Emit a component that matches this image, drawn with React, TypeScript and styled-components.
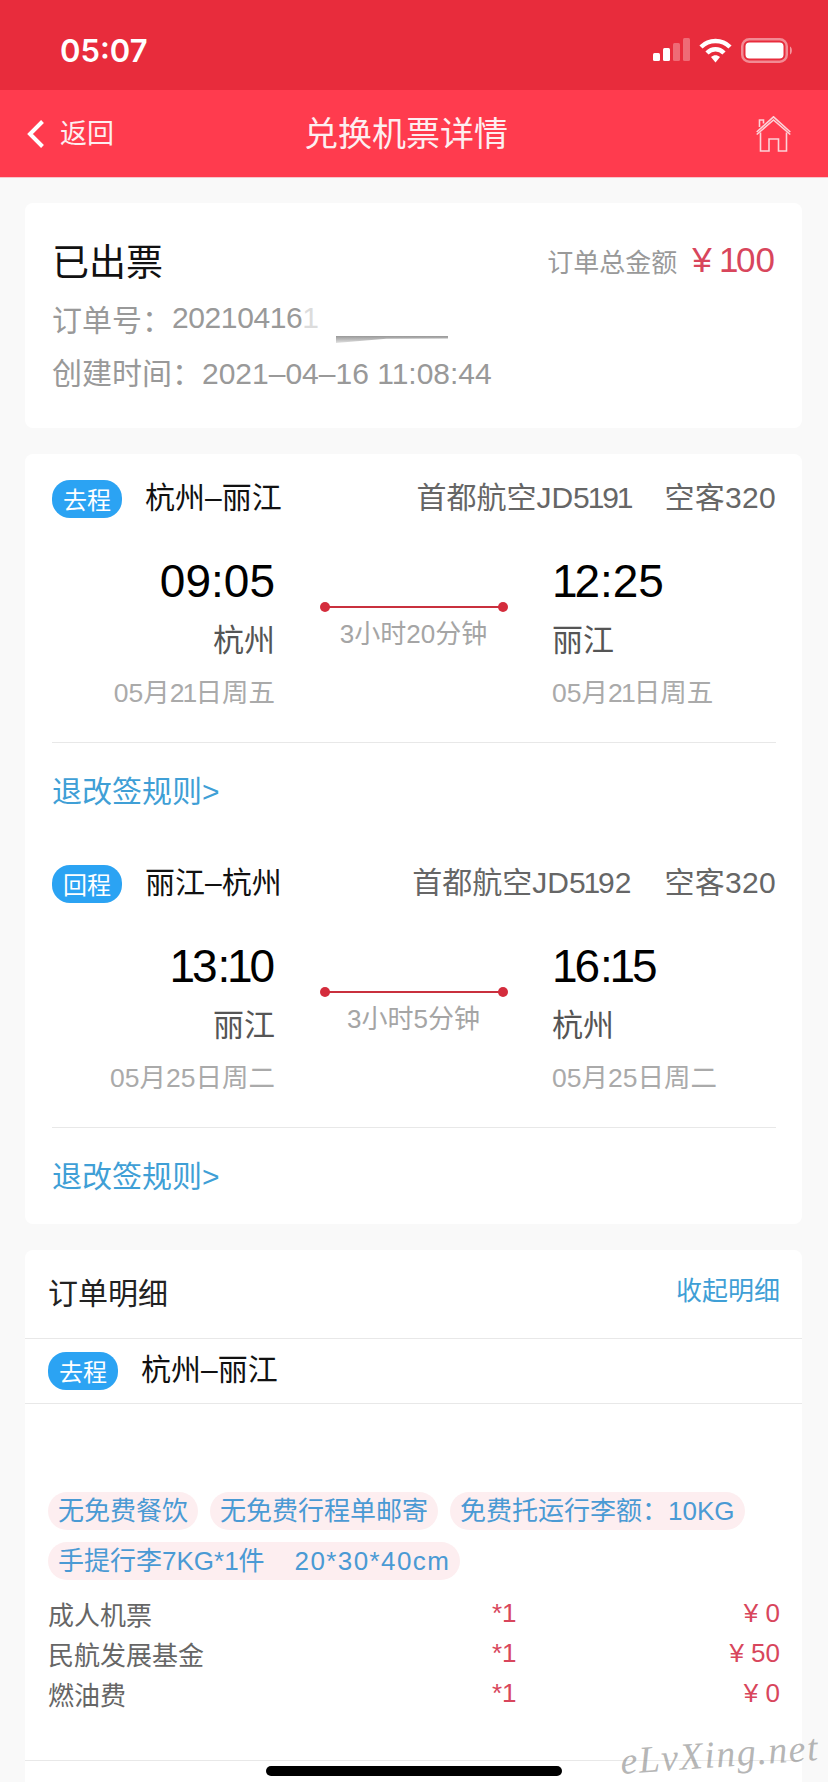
import { createGlobalStyle, styled } from 'styled-components';

const GlobalStyle = createGlobalStyle`
  html, body {
    margin: 0;
    padding: 0;
    background: #fff;
  }
  body {
    font-family: "Liberation Sans", "Noto Sans CJK SC", sans-serif;
  }
  * {
    box-sizing: border-box;
  }
`;

const Page = styled.div`
  position: relative;
  width: 828px;
  height: 1792px;
  overflow: hidden;
  background: #fff;
`;

const Screen = styled.div`
  height: 1782px;
  overflow: hidden;
  background: #f9f9f9;
`;

const StatusBar = styled.div`
  height: 90px;
  background: #e82c3c;
  display: flex;
  align-items: center;
  justify-content: space-between;
  padding: 10px 34px 0 60px;
  color: #fff;
`;

const Clock = styled.div`
  font-family: Inter, sans-serif;
  font-size: 31px;
  font-weight: 600;
`;

const StatusIcons = styled.div`
  display: flex;
  align-items: center;
  gap: 9px;
`;

const NavBar = styled.div`
  height: 88px;
  background: #ff3b4e;
  border-bottom: 1px solid #f7c6cb;
  display: grid;
  grid-template-columns: 304px 1fr auto;
  align-items: center;
  padding-right: 37px;
  color: #fdeef0;
`;

const BackLink = styled.div`
  display: flex;
  align-items: center;
  gap: 14px;
  padding-left: 26px;
  font-size: 27px;
`;

const BackLabel = styled.span`
  padding-bottom: 4px;
`;

const NavTitle = styled.div`
  font-size: 34px;
  padding-bottom: 4px;
`;

const Content = styled.div`
  display: flex;
  flex-direction: column;
  gap: 26px;
  padding: 25px 26px 0 25px;
`;

const Card = styled.div`
  background: #fff;
  border-radius: 8px;
`;

const SummaryCard = styled(Card)`
  height: 225px;
  padding: 30px 27px 0 27px;
`;

const SummaryTop = styled.div`
  display: flex;
  align-items: center;
  justify-content: space-between;
  height: 54px;
  margin-bottom: 4px;
`;

const StateText = styled.div`
  font-size: 37px;
  color: #111;
`;

const TotalBox = styled.div`
  display: flex;
  align-items: center;
  gap: 15px;
  font-size: 26px;
  color: #999;
`;

const TotalAmount = styled.span`
  font-size: 35px;
  color: #d8465c;
`;

const MetaLine = styled.div`
  display: flex;
  height: 53px;
  align-items: center;
  font-size: 30px;
  color: #999;
`;

const OrderNumber = styled.span`
  letter-spacing: -0.4px;
`;

const FadedDigit = styled.span`
  color: #dcdcdc;
`;

const Smudge = styled.div`
  position: absolute;
  left: 336px;
  top: 336px;
  width: 112px;
  height: 7px;
  background: linear-gradient(to bottom, #999 0%, #bbb 50%, #e2e2e2 100%);
  clip-path: polygon(0 0, 100% 0, 100% 35%, 45% 40%, 0 100%);
`;

const NarrowOne = styled.span<{ $lead?: boolean }>`
  margin-left: ${(p) => (p.$lead ? '0' : '-0.07em')};
  letter-spacing: -0.07em;
`;

const TripCard = styled(Card)`
  padding: 0 26px 0 27px;
`;

const Leg = styled.div`
  padding-top: 26px;
`;

const LegHeader = styled.div`
  display: flex;
  align-items: center;
  height: 38px;
  font-size: 30px;
`;

const LegTag = styled.span`
  display: flex;
  align-items: center;
  justify-content: center;
  width: 70px;
  height: 38px;
  flex-shrink: 0;
  padding-bottom: 2px;
  border-radius: 18px;
  background: #2ba3f3;
  color: #fff;
  font-size: 24px;
`;

const RouteName = styled.span`
  margin-left: 23px;
  padding-bottom: 8px;
  color: #111;
`;

const FlightInfo = styled.span`
  margin-left: auto;
  padding-bottom: 8px;
  display: flex;
  gap: 33px;
  color: #666;
`;

const PlaneName = styled.span`
  letter-spacing: 0.3px;
`;

const LegBody = styled.div`
  display: grid;
  grid-template-columns: 223px 277px 1fr;
  margin-top: 33px;
`;

const Stop = styled.div<{ $alignRight?: boolean }>`
  text-align: ${(p) => (p.$alignRight ? 'right' : 'left')};
`;

const StopTime = styled.div`
  height: 60px;
  line-height: 60px;
  font-size: 46px;
  color: #000;
`;

const StopCity = styled.div`
  height: 60px;
  line-height: 60px;
  font-size: 31px;
  color: #555;
`;

const StopDate = styled.div`
  height: 44px;
  line-height: 44px;
  font-size: 26.5px;
  color: #aaa;
`;

const Duration = styled.div`
  display: flex;
  flex-direction: column;
  align-items: center;
  padding-top: 51px;
`;

const DurationLine = styled.div`
  position: relative;
  width: 178px;
  height: 10px;
  &::before {
    content: '';
    position: absolute;
    left: 0;
    right: 0;
    top: 4px;
    height: 2px;
    background: #c9303e;
  }
`;

const LineDot = styled.span<{ $end?: boolean }>`
  position: absolute;
  top: 0;
  ${(p) => (p.$end ? 'right: -5px;' : 'left: -5px;')}
  width: 10px;
  height: 10px;
  border-radius: 50%;
  background: #d42c3c;
`;

const DurationText = styled.div`
  margin-top: 7px;
  font-size: 26px;
  line-height: 30px;
  color: #a5a5a5;
`;

const RuleRow = styled.div`
  height: 97px;
  margin-top: 27px;
  padding-bottom: 4px;
  border-top: 1px solid #e8e8e8;
  display: flex;
  align-items: center;
  font-size: 30px;
  color: #3f9fd6;
`;

const DetailHeader = styled.div`
  height: 89px;
  display: flex;
  align-items: center;
  justify-content: space-between;
  padding: 0 22px 6px 23px;
  border-bottom: 1px solid #e8e8e8;
`;

const DetailTitle = styled.div`
  font-size: 30px;
  color: #222;
`;

const CollapseLink = styled.div`
  font-size: 26px;
  color: #3f9fd6;
  margin-top: -6px;
`;

const DetailLeg = styled(LegHeader)`
  height: 65px;
  padding-left: 23px;
  border-bottom: 1px solid #e8e8e8;
`;

const DetailBody = styled.div`
  padding: 88px 22px 0 23px;
`;

const PerkList = styled.div`
  display: flex;
  flex-wrap: wrap;
  gap: 12px;
`;

const Perk = styled.span`
  height: 38px;
  line-height: 38px;
  padding: 0 10px;
  border-radius: 19px;
  background: #fdeef0;
  color: #4a9ad4;
  font-size: 26px;
  white-space: pre;
`;

const PerkSize = styled.span`
  margin-left: 30px;
  letter-spacing: 1.4px;
`;

const FeeList = styled.div`
  margin-top: 15px;
`;

const FeeRow = styled.div`
  display: grid;
  grid-template-columns: 444px 1fr auto;
  height: 40px;
  align-items: center;
  padding-bottom: 6px;
  font-size: 26px;
  color: #666;
`;

const FeeCount = styled.span`
  color: #d8465c;
`;

const FeeAmount = styled.span`
  color: #d8465c;
`;

const DetailFoot = styled.div`
  margin-top: 45px;
  height: 40px;
  border-top: 1px solid #e8e8e8;
`;

const HomeBar = styled.div`
  position: absolute;
  left: 266px;
  top: 1766px;
  width: 296px;
  height: 10px;
  border-radius: 5px;
  background: #000;
`;

const Watermark = styled.div`
  position: absolute;
  left: 620px;
  top: 1732px;
  font-family: "Liberation Serif", serif;
  font-style: italic;
  font-size: 38px;
  letter-spacing: 1.5px;
  color: rgba(150, 150, 150, 0.7);
  transform: rotate(-4deg);
`;

type LegData = {
  tag: string;
  route: string;
  flight: string;
  plane: string;
  from: { time: string; city: string; date: string };
  to: { time: string; city: string; date: string };
  duration: string;
};

const legs: LegData[] = [
  {
    tag: '去程',
    route: '杭州–丽江',
    flight: '首都航空JD5191',
    plane: '空客320',
    from: { time: '09:05', city: '杭州', date: '05月21日周五' },
    to: { time: '12:25', city: '丽江', date: '05月21日周五' },
    duration: '3小时20分钟',
  },
  {
    tag: '回程',
    route: '丽江–杭州',
    flight: '首都航空JD5192',
    plane: '空客320',
    from: { time: '13:10', city: '丽江', date: '05月25日周二' },
    to: { time: '16:15', city: '杭州', date: '05月25日周二' },
    duration: '3小时5分钟',
  },
];

const perks = ['无免费餐饮', '无免费行程单邮寄', '免费托运行李额：10KG'];

const fees = [
  { name: '成人机票', count: '*1', amount: '¥ 0' },
  { name: '民航发展基金', count: '*1', amount: '¥ 50' },
  { name: '燃油费', count: '*1', amount: '¥ 0' },
];

// the reference font has a narrow "1", Liberation's digits are all one width
function Digits({ text }: { text: string }) {
  return (
    <>
      {text.split('').map((c, i) =>
        c === '1' ? (
          <NarrowOne key={i} $lead={i === 0}>
            1
          </NarrowOne>
        ) : (
          c
        ),
      )}
    </>
  );
}

function SignalIcon() {
  return (
    <svg width="37" height="24" viewBox="0 0 37 24">
      <rect x="0" y="15" width="7" height="8" rx="1.5" fill="#fff" />
      <rect x="10" y="10" width="7" height="13" rx="1.5" fill="#fff" />
      <rect x="20" y="5" width="7" height="18" rx="1.5" fill="#fff" fillOpacity="0.3" />
      <rect x="30" y="0" width="7" height="23" rx="1.5" fill="#fff" fillOpacity="0.3" />
    </svg>
  );
}

function WifiIcon() {
  return (
    <svg width="33" height="25" viewBox="0 0 33 25" fill="none">
      <path d="M2 9 C10 1 23 1 31 9" stroke="#fff" strokeWidth="4.5" />
      <path d="M8 15 C13 10 20 10 25 15" stroke="#fff" strokeWidth="4.5" />
      <path d="M12 19 C15 16.5 18 16.5 21 19 L16.5 24.5 Z" fill="#fff" />
    </svg>
  );
}

function BatteryIcon() {
  return (
    <svg width="53" height="25" viewBox="0 0 53 25" fill="none">
      <rect x="1.25" y="1.25" width="44.5" height="22.5" rx="7" stroke="#fff" strokeOpacity="0.45" strokeWidth="2.5" />
      <rect x="4.5" y="4.5" width="38" height="16" rx="4" fill="#fff" />
      <path d="M49 8.5 C51.5 9.5 51.5 15.5 49 16.5 Z" fill="#fff" fillOpacity="0.5" />
    </svg>
  );
}

function BackIcon() {
  return (
    <svg width="20" height="30" viewBox="0 0 20 30" fill="none">
      <path d="M16.5 2.5 L4 15 L16.5 27.5" stroke="#fff" strokeWidth="4" />
    </svg>
  );
}

function HomeIcon() {
  return (
    <svg width="35" height="36" viewBox="0 0 35 36" fill="none" stroke="#fcd3d8" strokeWidth="1.6">
      <path d="M0.7 16 L17.5 0.8 L34.3 16" />
      <path d="M0.7 18.5 L17.5 4 L34.3 18.5" />
      <path d="M3.5 11 V4 H7.5 V7.5" />
      <path d="M4.5 16.5 V35 H13 V23 H22.5 V35 H30.5 V16.5" />
    </svg>
  );
}

function LegBlock({ leg }: { leg: LegData }) {
  return (
    <Leg>
      <LegHeader>
        <LegTag>{leg.tag}</LegTag>
        <RouteName>{leg.route}</RouteName>
        <FlightInfo>
          <span>
            <Digits text={leg.flight} />
          </span>
          <PlaneName>{leg.plane}</PlaneName>
        </FlightInfo>
      </LegHeader>
      <LegBody>
        <Stop $alignRight>
          <StopTime>
            <Digits text={leg.from.time} />
          </StopTime>
          <StopCity>{leg.from.city}</StopCity>
          <StopDate>
            <Digits text={leg.from.date} />
          </StopDate>
        </Stop>
        <Duration>
          <DurationLine>
            <LineDot />
            <LineDot $end />
          </DurationLine>
          <DurationText>{leg.duration}</DurationText>
        </Duration>
        <Stop>
          <StopTime>
            <Digits text={leg.to.time} />
          </StopTime>
          <StopCity>{leg.to.city}</StopCity>
          <StopDate>
            <Digits text={leg.to.date} />
          </StopDate>
        </Stop>
      </LegBody>
      <RuleRow>退改签规则&gt;</RuleRow>
    </Leg>
  );
}

export default function App() {
  return (
    <Page>
      <GlobalStyle />
      <Screen>
        <StatusBar>
          <Clock>05:07</Clock>
          <StatusIcons>
            <SignalIcon />
            <WifiIcon />
            <BatteryIcon />
          </StatusIcons>
        </StatusBar>
        <NavBar>
          <BackLink>
            <BackIcon />
            <BackLabel>返回</BackLabel>
          </BackLink>
          <NavTitle>兑换机票详情</NavTitle>
          <HomeIcon />
        </NavBar>
        <Content>
          <SummaryCard>
            <SummaryTop>
              <StateText>已出票</StateText>
              <TotalBox>
                订单总金额
                <TotalAmount>
                  <Digits text="¥ 100" />
                </TotalAmount>
              </TotalBox>
            </SummaryTop>
            <MetaLine>
              订单号：
              <OrderNumber>
                20210416
                <FadedDigit>1</FadedDigit>
              </OrderNumber>
            </MetaLine>
            <MetaLine>创建时间：2021–04–16 11:08:44</MetaLine>
          </SummaryCard>
          <TripCard>
            {legs.map((leg) => (
              <LegBlock key={leg.tag} leg={leg} />
            ))}
          </TripCard>
          <Card>
            <DetailHeader>
              <DetailTitle>订单明细</DetailTitle>
              <CollapseLink>收起明细</CollapseLink>
            </DetailHeader>
            <DetailLeg>
              <LegTag>去程</LegTag>
              <RouteName>杭州–丽江</RouteName>
            </DetailLeg>
            <DetailBody>
              <PerkList>
                {perks.map((perk) => (
                  <Perk key={perk}>{perk}</Perk>
                ))}
                <Perk>
                  手提行李7KG*1件
                  <PerkSize>20*30*40cm</PerkSize>
                </Perk>
              </PerkList>
              <FeeList>
                {fees.map((fee) => (
                  <FeeRow key={fee.name}>
                    <span>{fee.name}</span>
                    <FeeCount>{fee.count}</FeeCount>
                    <FeeAmount>{fee.amount}</FeeAmount>
                  </FeeRow>
                ))}
              </FeeList>
            </DetailBody>
            <DetailFoot />
          </Card>
        </Content>
      </Screen>
      <Smudge />
      <HomeBar />
      <Watermark>eLvXing.net</Watermark>
    </Page>
  );
}
